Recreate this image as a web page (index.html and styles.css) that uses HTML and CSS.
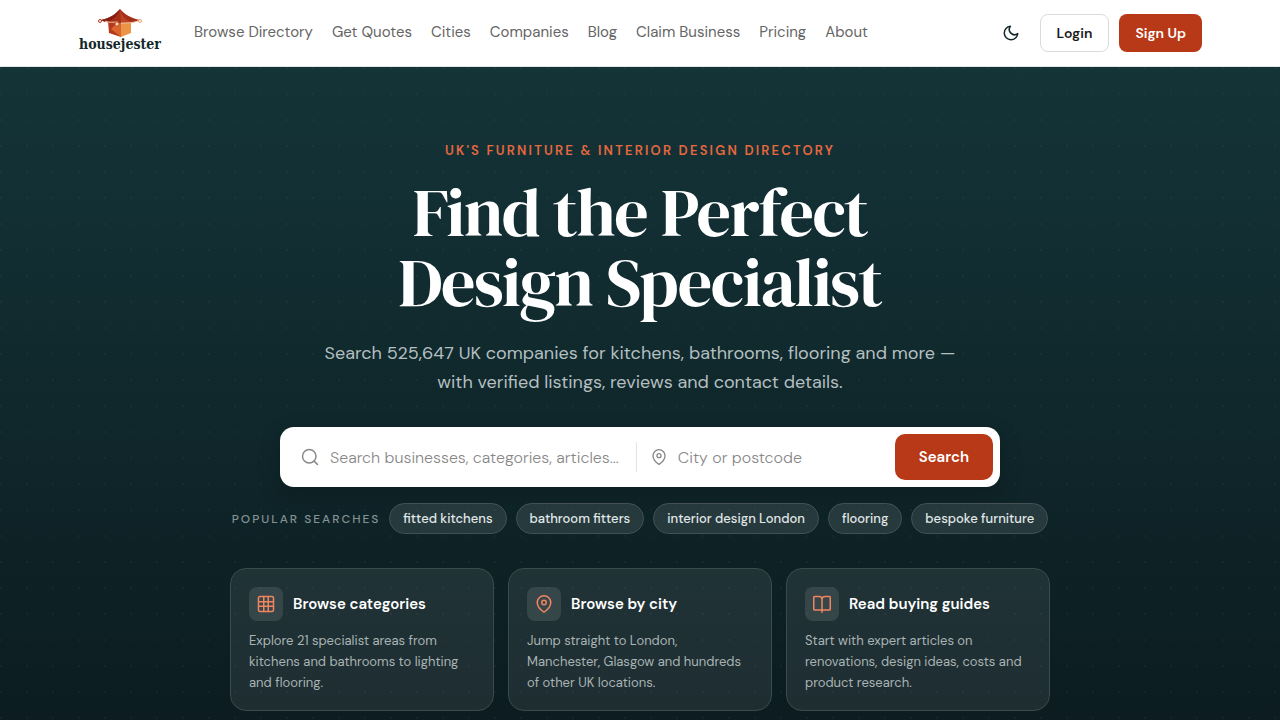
FILE: index.html
```html
<!DOCTYPE html>
<html lang="en">
  <head>
    <meta charset="utf-8" />
    <meta name="viewport" content="width=device-width, initial-scale=1" />
    <title>housejester</title>
    <link rel="stylesheet" href="styles.css">
  </head>
  <body>
    <header class="site-header">
      <div class="header-inner">
        <a href="#" class="logo">
          <svg class="logo-mark" viewBox="0 0 46 28" aria-hidden="true">
            <path d="M11 12 L24 14 L24 28 L12 24 Z" fill="#b5391a" />
            <path d="M24 14 L34 13 L34 24 L24 28 Z" fill="#eb9445" />
            <path d="M14 20 L20 14 L24 14 L24 28 Z" fill="#d9642c" />
            <path d="M23 0 C27 5 34 9 43 11 C37 14 31 14 24 14 C16 14 9 14 4 11 C13 9 19 5 23 0 Z" fill="#a5301a" />
            <path d="M23 0 C21 6 17 11 10 13 C8 13 6 12 4 11 C13 9 19 5 23 0 Z" fill="#861f12" />
            <path d="M23 0 C24 5 27 10 34 13 C30 14 27 14 24 14 Z" fill="#bd4325" />
            <path d="M8 12 C12 14 17 13 21 13 M24 14 C30 14 36 14 41 12" fill="none" stroke="#f3c9a4" stroke-width="1" />
            <circle cx="3" cy="12" r="1.500" fill="#fff" stroke="#b5391a" stroke-width="1" />
            <circle cx="20" cy="15" r="2" fill="#fbe3d2" stroke="#c9542a" stroke-width="1" />
            <circle cx="43" cy="12" r="1.500" fill="#fff" stroke="#eda26a" stroke-width="1" />
          </svg>
          <span class="logo-text">housejester</span>
        </a>

        <nav class="main-nav">
          <a href="#">Browse Directory</a>
          <a href="#">Get Quotes</a>
          <a href="#">Cities</a>
          <a href="#">Companies</a>
          <a href="#">Blog</a>
          <a href="#">Claim Business</a>
          <a href="#">Pricing</a>
          <a href="#">About</a>
        </nav>

        <div class="header-actions">
          <button type="button" class="theme-toggle" aria-label="Toggle theme">
            <svg class="icon" viewBox="0 0 24 24"><path d="M21 12.8A9 9 0 1 1 11.2 3a7 7 0 0 0 9.8 9.8z" /></svg>
          </button>
          <button type="button" class="btn btn-outline">Login</button>
          <button type="button" class="btn btn-primary">Sign Up</button>
        </div>
      </div>
    </header>

    <main class="hero">
      <p class="eyebrow">UK's Furniture &amp; Interior Design Directory</p>
      <h1>Find the Perfect<br>Design Specialist</h1>
      <p class="lead">Search 525,647 UK companies for kitchens, bathrooms, flooring and more — with verified listings, reviews and contact details.</p>

      <form class="search">
        <label class="field field-query">
          <svg class="icon" viewBox="0 0 24 24"><circle cx="11" cy="11" r="9" /><path d="m22 22-4.500-4.500" /></svg>
          <input type="text" placeholder="Search businesses, categories, articles..." aria-label="Search">
        </label>
        <label class="field field-place">
          <svg class="icon" viewBox="0 0 24 24"><path d="M21 10c0 7-9 13-9 13s-9-6-9-13a9 9 0 0 1 18 0z" /><circle cx="12" cy="10" r="3" /></svg>
          <input type="text" placeholder="City or postcode" aria-label="City or postcode">
        </label>
        <button type="submit" class="btn-search">Search</button>
      </form>

      <div class="popular">
        <span class="popular-label">Popular searches</span>
        <a href="#">fitted kitchens</a>
        <a href="#">bathroom fitters</a>
        <a href="#">interior design London</a>
        <a href="#">flooring</a>
        <a href="#">bespoke furniture</a>
      </div>

      <div class="cards">
        <a href="#" class="card">
          <div class="card-head">
            <span class="card-icon">
              <svg class="icon" viewBox="0 0 24 24"><rect x="2" y="2" width="20" height="20" rx="2" /><path d="M2 9h20M2 15h20M9 2v20M15 2v20" /></svg>
            </span>
            <h2>Browse categories</h2>
          </div>
          <p>Explore 21 specialist areas from kitchens and bathrooms to lighting and flooring.</p>
        </a>
        <a href="#" class="card">
          <div class="card-head">
            <span class="card-icon">
              <svg class="icon" viewBox="0 0 24 24"><path d="M21 10c0 7-9 13-9 13s-9-6-9-13a9 9 0 0 1 18 0z" /><circle cx="12" cy="10" r="3" /></svg>
            </span>
            <h2>Browse by city</h2>
          </div>
          <p>Jump straight to London, Manchester, Glasgow and hundreds of other UK locations.</p>
        </a>
        <a href="#" class="card">
          <div class="card-head">
            <span class="card-icon">
              <svg class="icon" viewBox="0 0 24 24"><path d="M12 6v17M8 20H2a1 1 0 0 1-1-1V3a1 1 0 0 1 1-1h6a4 4 0 0 1 4 4 4 4 0 0 1 4-4h6a1 1 0 0 1 1 1v16a1 1 0 0 1-1 1z" /></svg>
            </span>
            <h2>Read buying guides</h2>
          </div>
          <p>Start with expert articles on renovations, design ideas, costs and product research.</p>
        </a>
      </div>
    </main>
  </body>
</html>
```

FILE: styles.css
```css
* {
  box-sizing: border-box;
}

body {
  margin: 0;
  font-family: "DM Sans", Inter, "Liberation Sans", sans-serif;
  font-size: 15px;
  color: #1a1a1a;
  background: #0c1c20;
}

a {
  color: inherit;
  text-decoration: none;
}

button,
input {
  font: inherit;
}

button {
  cursor: pointer;
}

.icon {
  flex: none;
  width: 18px;
  height: 18px;
  fill: none;
  stroke: currentColor;
  stroke-width: 2;
  stroke-linecap: round;
  stroke-linejoin: round;
}

/* header */

.site-header {
  background: #fff;
  border-bottom: 1px solid #e0e4e4;
}

.header-inner {
  display: flex;
  align-items: center;
  max-width: 1124px;
  height: 66px;
  margin: 0 auto;
}

.logo {
  display: flex;
  flex-direction: column;
  align-items: center;
  width: 84px;
  margin-right: 32px;
  padding-bottom: 6px;
}

.logo-mark {
  width: 46px;
  height: 28px;
}

.logo-text {
  font-family: "DejaVu Serif Condensed", "DejaVu Serif", serif;
  font-size: 14px;
  font-weight: 700;
  line-height: 14px;
  color: #12282b;
}

.main-nav {
  display: flex;
  gap: 19px;
  padding-bottom: 2px;
  color: #666;
  white-space: nowrap;
}

.header-actions {
  display: flex;
  align-items: center;
  gap: 10px;
  margin-left: auto;
}

.theme-toggle {
  display: flex;
  padding: 10px;
  border: none;
  background: none;
  color: #12282b;
}

.btn {
  height: 38px;
  padding: 0 16px;
  border: none;
  border-radius: 8px;
  font-size: 14px;
  font-weight: 600;
}

.btn-outline {
  border: 1px solid #d8dcdc;
  background: #fff;
  color: #1a1a1a;
}

.btn-primary {
  background: #b83918;
  color: #fff;
}

/* hero */

.hero {
  display: flex;
  flex-direction: column;
  align-items: center;
  padding: 73px 24px 9px;
  background:
    radial-gradient(circle at 1px 1px, rgba(255, 255, 255, 0.03) 1px, transparent 1px) 0 0 / 26px 26px,
    linear-gradient(180deg, #143438 0%, #0c1c20 100%);
  color: #fff;
}

.eyebrow {
  margin: 0;
  font-size: 13px;
  font-weight: 600;
  line-height: 22px;
  letter-spacing: 0.17em;
  text-transform: uppercase;
  color: #e8683f;
}

h1 {
  margin: 16px 0 0;
  font-family: "DM Serif Display", "Liberation Serif", serif;
  font-size: 68px;
  font-weight: 400;
  line-height: 70px;
  letter-spacing: -0.02em;
  text-align: center;
}

.lead {
  max-width: 640px;
  margin: 21px 0 0;
  font-size: 18px;
  line-height: 29px;
  text-align: center;
  color: #b4bfc0;
}

.search {
  display: flex;
  align-items: center;
  width: 100%;
  max-width: 720px;
  height: 60px;
  margin-top: 30px;
  padding: 0 7px;
  border-radius: 14px;
  background: #fff;
  box-shadow: 0 8px 24px rgba(0, 0, 0, 0.15);
}

.field {
  display: flex;
  align-items: center;
  gap: 11px;
  height: 30px;
  padding: 0 14px;
  color: #888;
}

.field input {
  flex: 1;
  min-width: 0;
  padding: 0;
  border: none;
  outline: none;
  background: none;
  font-size: 16px;
  font-weight: 300;
  color: #1a1a1a;
}

.field input::placeholder {
  color: #888;
}

.field-query {
  flex: 321;
}

.field-place {
  flex: 230;
  border-left: 1px solid #e4e4e4;
}

.field-place .icon {
  width: 16px;
  height: 16px;
}

.btn-search {
  height: 46px;
  padding: 0 24px;
  border: none;
  border-radius: 10px;
  background: #b83918;
  font-weight: 600;
  color: #fff;
}

.popular {
  display: flex;
  flex-wrap: wrap;
  align-items: center;
  justify-content: center;
  gap: 9px;
  margin-top: 16px;
}

.popular-label {
  font-size: 12px;
  font-weight: 500;
  letter-spacing: 2px;
  text-transform: uppercase;
  color: #849293;
}

.popular a {
  padding: 0 13px;
  border: 1px solid #445253;
  border-radius: 16px;
  background: rgba(255, 255, 255, 0.1);
  font-size: 13px;
  font-weight: 500;
  line-height: 29px;
  color: #e0e8e8;
}

.cards {
  display: grid;
  grid-template-columns: repeat(3, 1fr);
  gap: 14px;
  width: 100%;
  max-width: 820px;
  margin-top: 34px;
}

.card {
  padding: 18px 18px 17px;
  border: 1px solid #3b4b4b;
  border-radius: 16px;
  background: rgba(255, 255, 255, 0.08);
}

.card-head {
  display: flex;
  align-items: center;
  gap: 10px;
}

.card-icon {
  display: flex;
  align-items: center;
  justify-content: center;
  width: 34px;
  height: 34px;
  border-radius: 8px;
  background: rgba(255, 255, 255, 0.1);
  color: #f08560;
}

.card h2 {
  margin: 0;
  font-size: 15px;
  font-weight: 600;
}

.card p {
  margin: 9px 0 0;
  font-size: 13px;
  line-height: 21px;
  color: #a9b4b4;
}
```
